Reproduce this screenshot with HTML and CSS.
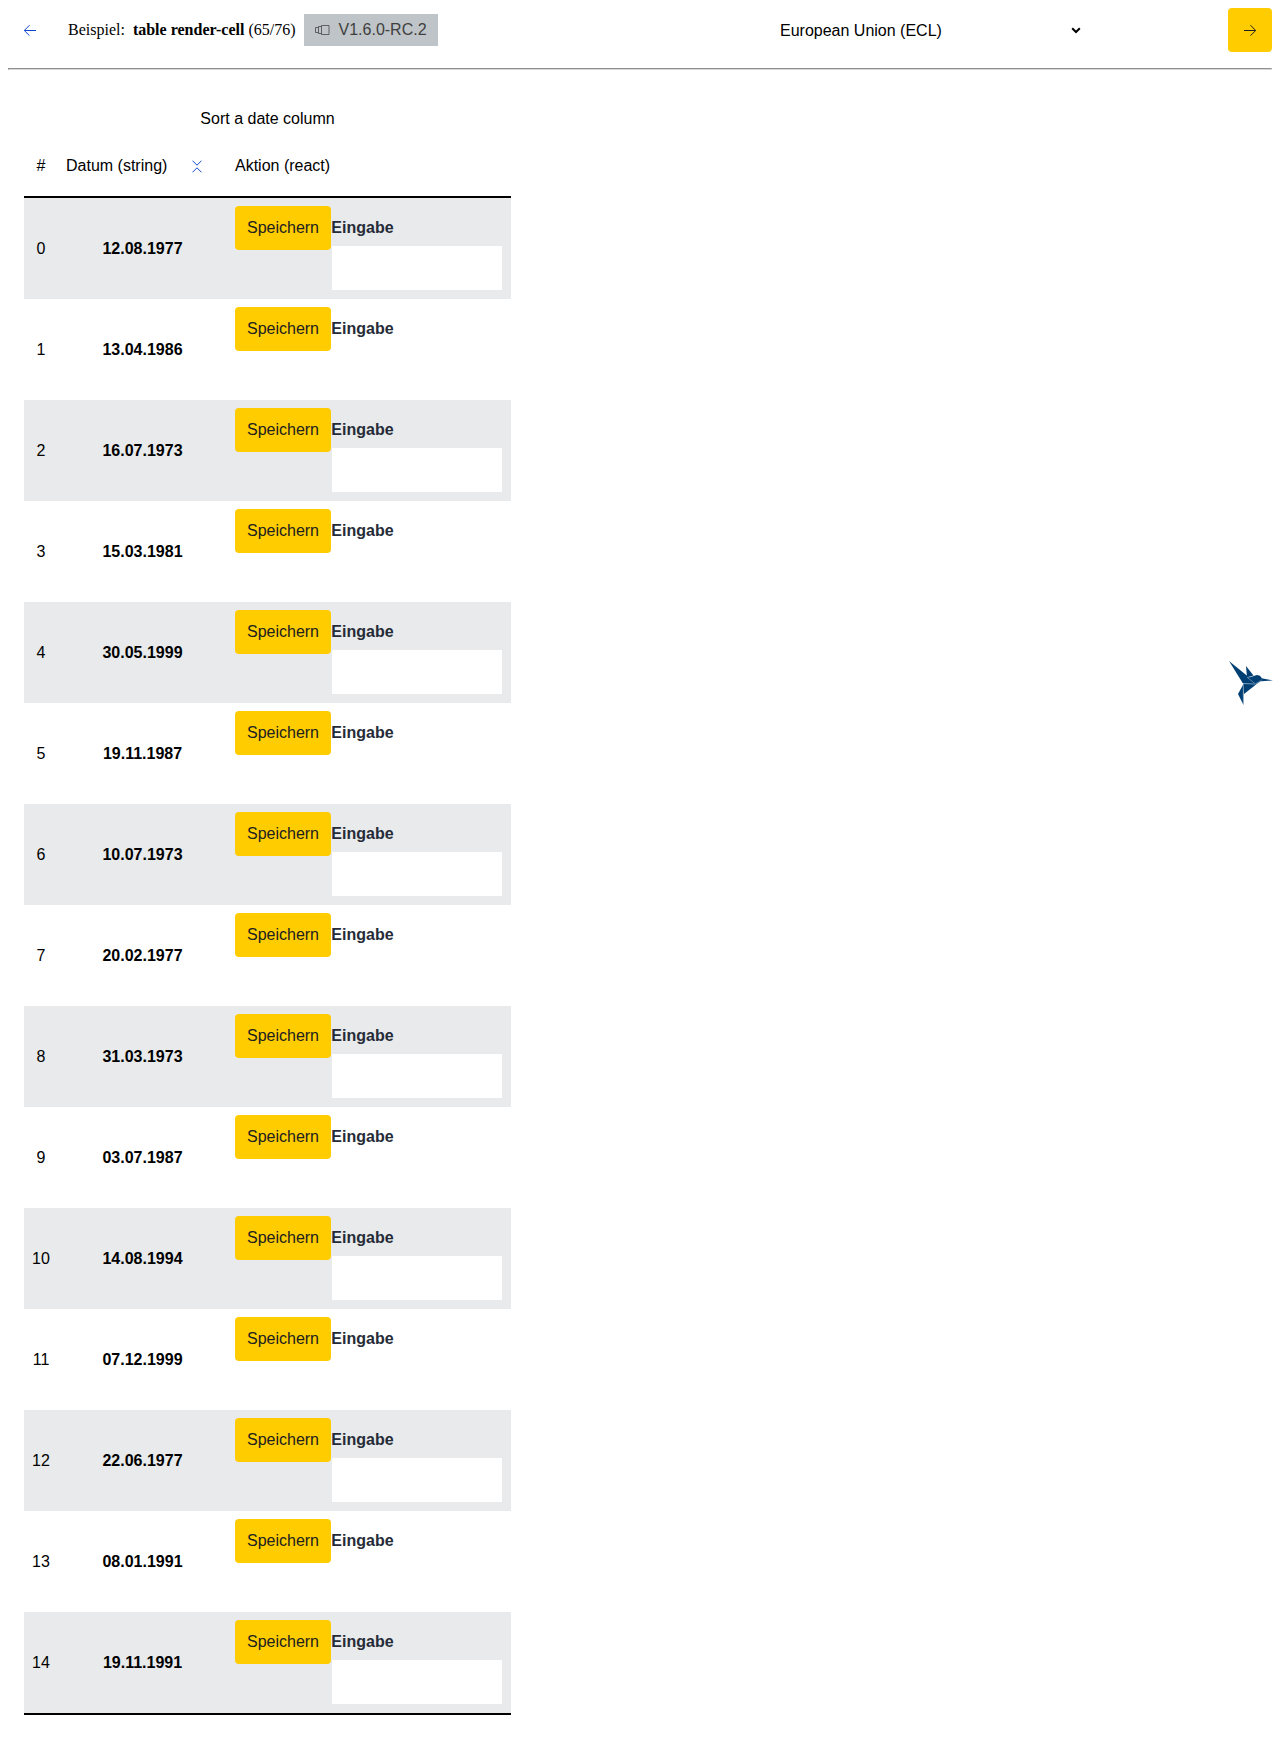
FILE: index.html
```html
<!DOCTYPE html>
<html lang="de">
<head>
<meta charset="utf-8">
<title>table render-cell</title>
<link rel="stylesheet" href="styles.css">
</head>
<body>
<header class="topbar">
  <button class="nav-button" aria-label="Zurück"><svg width="12" height="12" viewBox="0 0 12 12"><path d="M12 6.5H.5M5.5 1.2L.3 6.5l5.2 5.2"/></svg></button>
  <div class="example">Beispiel: <b>table render-cell</b> (65/76)</div>
  <div class="version"><svg width="15" height="10" viewBox="0 0 15 10"><path d="M6.500.5h7.500v9h-7.500zM6.500 1.500H3.500v7h3M3.500 2.500H.5v5h3"/></svg><span>V1.6.0-RC.2</span></div>
  <div class="theme"><span>European Union (ECL)</span><svg width="10" height="7" viewBox="0 0 10 7"><path d="M1.2 1.2L5 5l3.8-3.8"/></svg></div>
  <button class="nav-button nav-next" aria-label="Weiter"><svg width="12" height="12" viewBox="0 0 12 12"><path d="M0 6.5h11.5M6.5 1.2l5.2 5.3-5.2 5.2"/></svg></button>
</header>
<hr class="divider">
<table class="table">
  <caption>Sort a date column</caption>
  <colgroup><col class="col-index"><col class="col-date"><col class="col-action"></colgroup>
  <thead>
    <tr>
      <th>#</th>
      <th><div class="sort-head"><span>Datum (string)</span><svg width="10" height="13" viewBox="0 0 10 13"><path d="M.5.7L5 5.2 9.5.7M.5 12.3L5 7.8l4.5 4.5"/></svg></div></th>
      <th class="action-head">Aktion (react)</th>
    </tr>
  </thead>
  <tbody id="rows"></tbody>
</table>
<svg class="bird" width="44" height="45" viewBox="0 0 44 45">
  <g fill="#003f74">
    <path d="M0 0L19 15.500 27 23 14 22.500z"/>
    <path d="M17 5L24.500 14.500 18 16.500z"/>
    <path d="M18 16.500L24.500 15 28 14 31 14.800 33 17.500 31.500 20.500 26 23.500z"/>
    <path d="M32.500 17.300L44 19.300 32 20.200z"/>
    <path d="M14.500 23v21L9 33z"/>
    <path d="M14 22.500L27 23 31.500 20 15 33z"/>
  </g>
  <path d="M14 22.500l12 .7 5.500-3.500M18.200 16.300l8 6.500M14.300 22.500v21M18.500 16.500l6-1.500" fill="none" stroke="#b9ccda" stroke-width=".5"/>
</svg>
<script src="script.js"></script>
</body>
</html>
```
FILE: styles.css
```css
body {
  margin: 8px;
  background: #fff;
  color: #000;
  font: 16px "Liberation Serif", serif;
}
.topbar {
  display: grid;
  grid-template-columns: 44px auto 134px 1fr 44px;
  align-items: center;
  height: 44px;
}
.nav-button {
  width: 44px;
  height: 44px;
  padding: 0;
  border: 0;
  border-radius: 4px;
  background: none;
  display: flex;
  align-items: center;
  justify-content: center;
}
.nav-button path { fill: none; stroke: #0e47cb; stroke-width: 1; }
.nav-next { background: #ffcc00; }
.nav-next path { stroke: #202020; }
.example { padding: 0 8px 0 16px; white-space: nowrap; }
.example b { margin-left: 4px; }
.version {
  height: 32px;
  display: flex;
  align-items: center;
  gap: 9px;
  padding-left: 11px;
  box-sizing: border-box;
  background: #bec4c7;
  color: #404040;
  font: 16px/32px "Liberation Sans", sans-serif;
}
.version path { fill: none; stroke: #404040; stroke-width: .75; }
.theme {
  justify-self: end;
  width: 301px;
  margin-right: 147px;
  padding-top: 1px;
  display: flex;
  align-items: center;
  justify-content: space-between;
  font: 16px "Liberation Sans", sans-serif;
}
.theme path { fill: none; stroke: #000; stroke-width: 2; }
.divider { margin: 16px 0 0; border: 1px solid; border-color: #8f8f8f #d8d8d8 #d8d8d8 #8f8f8f; }
.table {
  width: 487px;
  margin: 31px 0 0 16px;
  table-layout: fixed;
  border-collapse: separate;
  border-spacing: 0;
  font: 16px "Liberation Sans", sans-serif;
  border-bottom: 2px solid #000;
}
.table caption { height: 36px; line-height: 36px; }
.col-index { width: 34px; }
.col-date { width: 169px; }
.table th {
  height: 61px;
  padding: 0;
  box-sizing: border-box;
  border-bottom: 2px solid #000;
  font-weight: 400;
  line-height: 58px;
  vertical-align: top;
}
.table .action-head { padding-left: 8px; text-align: left; }
.sort-head { display: flex; align-items: center; gap: 25px; padding-left: 8px; }
.sort-head path { fill: none; stroke: #0e47cb; stroke-width: 1; }
.table td {
  height: 101px;
  padding: 0;
  box-sizing: border-box;
  text-align: center;
}
.table tbody tr:nth-child(odd) { background: #e8eaeb; }
.table .date { font-weight: 700; }
.action {
  display: grid;
  grid-template-columns: 96px 170px;
  column-gap: 1px;
  height: 85px;
  padding-left: 8px;
}
.save {
  width: 96px;
  height: 44px;
  padding: 0;
  border: 0;
  border-radius: 4px;
  background: #ffcc00;
  color: #202020;
  font: 16px "Liberation Sans", sans-serif;
}
.field { display: flex; flex-direction: column; text-align: left; color: #262b38; font-weight: 700; }
.field span { height: 40px; line-height: 43px; margin-left: -0.7px; }
.field input { height: 44px; padding: 0; border: 0; background: #fff; }
.bird { position: absolute; left: 1229px; top: 661px; }
```
FILE: script.js
```js
const dates = ['12.08.1977', '13.04.1986', '16.07.1973', '15.03.1981', '30.05.1999',
  '19.11.1987', '10.07.1973', '20.02.1977', '31.03.1973', '03.07.1987',
  '14.08.1994', '07.12.1999', '22.06.1977', '08.01.1991', '19.11.1991'];
document.getElementById('rows').innerHTML = dates.map((date, i) => `
  <tr>
    <td>${i}</td>
    <td class="date">${date}</td>
    <td><div class="action"><button class="save">Speichern</button><label class="field"><span>Eingabe</span><input type="text"></label></div></td>
  </tr>`).join('');
```
